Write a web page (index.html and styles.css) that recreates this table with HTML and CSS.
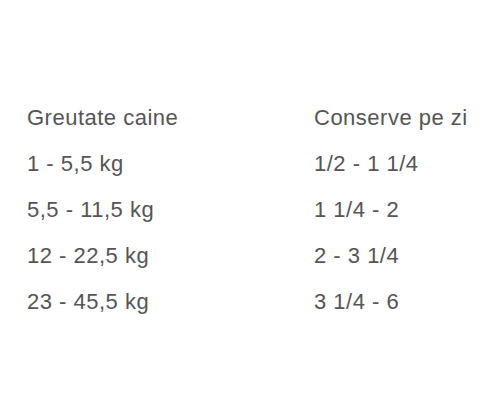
FILE: index.html
```html
<!DOCTYPE html>
<html lang="ro">
<head>
<meta charset="utf-8">
<title>Conserve</title>
<link rel="stylesheet" href="styles.css">
</head>
<body>
<div class="table">
  <div class="cell">Greutate caine</div><div class="cell">Conserve pe zi</div>
  <div class="cell">1 - 5,5 kg</div><div class="cell">1/2 - 1 1/4</div>
  <div class="cell">5,5 - 11,5 kg</div><div class="cell">1 1/4 - 2</div>
  <div class="cell">12 - 22,5 kg</div><div class="cell">2 - 3 1/4</div>
  <div class="cell">23 - 45,5 kg</div><div class="cell">3 1/4 - 6</div>
</div>
</body>
</html>
```

FILE: styles.css
```css
html, body {
  margin: 0;
  background: #ffffff;
}
.table {
  display: grid;
  grid-template-columns: 287px 1fr;
  padding: 95px 0 0 27px;
  font-family: "Liberation Sans", Arial, sans-serif;
  font-size: 22px;
  letter-spacing: 0.5px;
  line-height: 46px;
  color: #555555;
}
.cell {
  white-space: nowrap;
}
```
